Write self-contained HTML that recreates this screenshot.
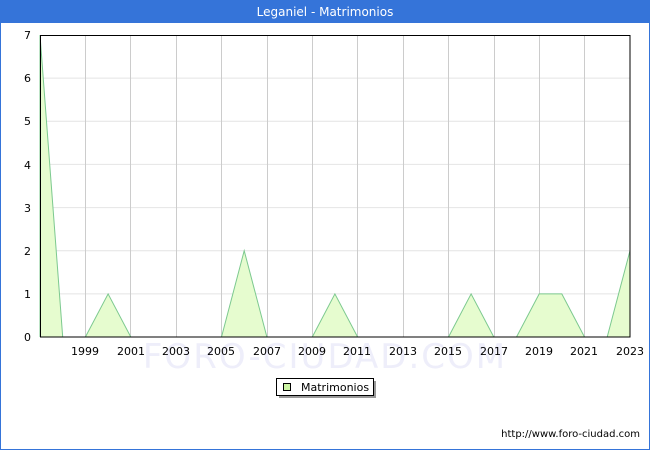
<!DOCTYPE html>
<html><head><meta charset="utf-8"><style>
html,body{margin:0;padding:0;background:#fff;}
body{width:650px;height:450px;overflow:hidden;font-family:"DejaVu Sans","Liberation Sans",sans-serif;}
</style></head><body>
<svg width="650" height="450" xmlns="http://www.w3.org/2000/svg" font-family="DejaVu Sans, Liberation Sans, sans-serif">
<rect x="0.5" y="0.5" width="649" height="449" fill="#fff" stroke="#3574d9"/>
<rect x="0" y="0" width="650" height="23" fill="#3574d9"/>
<text x="325" y="16" text-anchor="middle" font-size="12" fill="#fff">Leganiel - Matrimonios</text>
<text x="325" y="368" text-anchor="middle" font-size="34" fill="#eeeefa" letter-spacing="2">FORO-CIUDAD.COM</text>
<g stroke="#cccccc" stroke-width="1">
<line x1="40" y1="293.9" x2="630" y2="293.9" stroke="#e4e4e4"/>
<line x1="40" y1="250.7" x2="630" y2="250.7" stroke="#e4e4e4"/>
<line x1="40" y1="207.6" x2="630" y2="207.6" stroke="#e4e4e4"/>
<line x1="40" y1="164.4" x2="630" y2="164.4" stroke="#e4e4e4"/>
<line x1="40" y1="121.3" x2="630" y2="121.3" stroke="#e4e4e4"/>
<line x1="40" y1="78.1" x2="630" y2="78.1" stroke="#e4e4e4"/>
<line x1="85.5" y1="35" x2="85.5" y2="337"/>
<line x1="130.5" y1="35" x2="130.5" y2="337"/>
<line x1="176.5" y1="35" x2="176.5" y2="337"/>
<line x1="221.5" y1="35" x2="221.5" y2="337"/>
<line x1="267.5" y1="35" x2="267.5" y2="337"/>
<line x1="312.5" y1="35" x2="312.5" y2="337"/>
<line x1="357.5" y1="35" x2="357.5" y2="337"/>
<line x1="403.5" y1="35" x2="403.5" y2="337"/>
<line x1="448.5" y1="35" x2="448.5" y2="337"/>
<line x1="494.5" y1="35" x2="494.5" y2="337"/>
<line x1="539.5" y1="35" x2="539.5" y2="337"/>
<line x1="584.5" y1="35" x2="584.5" y2="337"/>
</g>
<polyline fill="#e6fccf" stroke="#7cc98f" stroke-width="1" points="40,337 40,35 62.7,337 85.4,337 108.1,293.9 130.8,337 221.5,337 244.2,250.7 266.9,337 312.3,337 334.9,293.9 357.6,337 448.5,337 471.1,293.9 493.8,337 516.5,337 539.2,293.9 561.8,293.9 584.5,337 607.2,337 630,250.7 630,337"/>
<rect x="40.5" y="35.5" width="589.5" height="301.5" fill="none" stroke="#000" stroke-width="1"/>
<g font-size="11" fill="#000" text-anchor="end">
<text x="31" y="341">0</text><text x="31" y="298">1</text><text x="31" y="255">2</text><text x="31" y="212">3</text><text x="31" y="169">4</text><text x="31" y="125">5</text><text x="31" y="82">6</text><text x="31" y="39">7</text>
</g>
<g font-size="11" fill="#000" text-anchor="middle">
<text x="85" y="355">1999</text><text x="131" y="355">2001</text><text x="176" y="355">2003</text><text x="221" y="355">2005</text><text x="267" y="355">2007</text><text x="312" y="355">2009</text><text x="357" y="355">2011</text><text x="403" y="355">2013</text><text x="448" y="355">2015</text><text x="494" y="355">2017</text><text x="539" y="355">2019</text><text x="584" y="355">2021</text><text x="630" y="355">2023</text>
</g>
<rect x="279" y="381" width="97" height="17" fill="#999"/>
<rect x="276.5" y="378.5" width="97" height="17" fill="#fff" stroke="#000"/>
<rect x="283.5" y="383.5" width="7" height="7" fill="#ccf5a4" stroke="#000"/>
<text x="301" y="391" font-size="11" fill="#000">Matrimonios</text>
<text x="640" y="437" text-anchor="end" font-size="10" fill="#000">http://www.foro-ciudad.com</text>
</svg>
</body></html>
